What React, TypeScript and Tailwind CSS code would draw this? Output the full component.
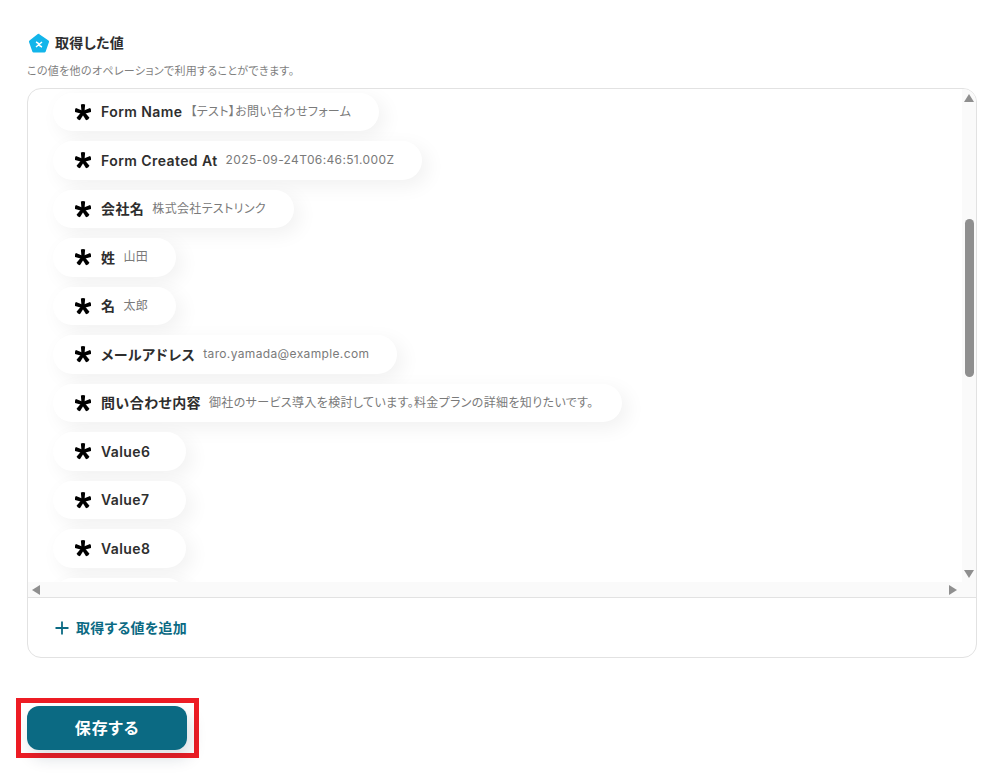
const fields = [
  { name: 'Form Name', value: '【テスト】お問い合わせフォーム' },
  { name: 'Form Created At', value: '2025-09-24T06:46:51.000Z' },
  { name: '会社名', value: '株式会社テストリンク' },
  { name: '姓', value: '山田' },
  { name: '名', value: '太郎' },
  { name: 'メールアドレス', value: 'taro.yamada@example.com' },
  { name: '問い合わせ内容', value: '御社のサービス導入を検討しています。料金プランの詳細を知りたいです。' },
  { name: 'Value6', value: '' },
  { name: 'Value7', value: '' },
  { name: 'Value8', value: '' },
  { name: 'Value9', value: '' },
];

function Asterisk() {
  return (
    <svg width="16" height="18" viewBox="0 0 16 18" className="shrink-0">
      {[0, 72, -72, 144, -144].map((a) => (
        <path key={a} d="M6.5 9.5 L5.9 1.4 Q8 0.4 10.1 1.4 L9.5 9.5 Z" fill="#000" transform={`rotate(${a} 8 9.5)`} />
      ))}
    </svg>
  );
}

function Pill({ name, value }: { name: string; value: string }) {
  return (
    <div className="flex h-[38.5px] w-fit shrink-0 items-center rounded-full bg-white pl-[22px] pr-[28px] shadow-[6px_6px_20px_rgba(0,0,0,0.06)]">
      <Asterisk />
      <span className="ml-[10px] whitespace-nowrap text-[14px] font-semibold tracking-[0.03em] text-[#2e2e2e]">{name}</span>
      <span className="ml-[8px] whitespace-nowrap text-[12px] tracking-[0.03em] text-[#7a7a7a]">{value}</span>
    </div>
  );
}

export default function App() {
  return (
    <div className="h-[779px] overflow-hidden bg-white font-['Inter','Noto_Sans_CJK_JP',sans-serif] [font-feature-settings:'palt']">
      <div className="px-[27px] pt-[33px] pr-[30px]">
        <div className="flex h-[20px] items-center gap-[5px] pl-[1px]">
          <svg width="22" height="21" viewBox="0 0 22 21">
            <path d="M11 1 L20.5 7.5 Q21.3 8 21 9 L17.6 18.8 Q17.3 19.6 16.4 19.6 L5.6 19.6 Q4.7 19.6 4.4 18.8 L1 9 Q0.7 8 1.5 7.5 L9.8 1 Q11 0.3 12 1 Z" fill="#12b5ea" />
            <path d="M8 9 Q10.5 10 11 11.5 Q11.5 13 14 14 M14 9 L8 14" stroke="#fff" strokeWidth="1.5" fill="none" />
          </svg>
          <h2 className="pb-[2px] text-[14px] font-semibold tracking-[0.02em] text-[#2e2e2e]">取得した値</h2>
        </div>
        <p className="mt-[11px] text-[11px] leading-[15px] tracking-[0.03em] text-[#7f7f7f]">この値を他のオペレーションで利用することができます。</p>

        <div className="mt-[9px] h-[570px] overflow-hidden rounded-[14px] border border-[#e2e2e2]">
          <div className="flex h-[509px] border-b border-[#e2e2e2]">
            <div className="flex min-w-0 flex-1 flex-col">
              <div className="flex h-[493px] flex-col gap-[10px] overflow-hidden pl-[25px] pt-[3.5px]">
                {fields.map((f) => (
                  <Pill key={f.name} name={f.name} value={f.value} />
                ))}
              </div>
              <div className="flex h-[15px] items-center justify-between bg-[#fafafa] px-[4px]">
                <div className="h-0 w-0 border-y-[5px] border-r-[8px] border-y-transparent border-r-[#8f8f8f]" />
                <div className="mr-[1px] h-0 w-0 border-y-[5px] border-l-[8px] border-y-transparent border-l-[#8f8f8f]" />
              </div>
            </div>
            <div className="flex w-[14px] flex-col items-center bg-[#fafafa] pt-[5px]">
              <div className="h-0 w-0 border-x-[5px] border-b-[8px] border-x-transparent border-b-[#8f8f8f]" />
              <div className="mt-[117px] h-[158px] w-[9px] rounded-full bg-[#8f8f8f]" />
              <div className="mt-[193px] h-0 w-0 border-x-[5px] border-t-[8px] border-x-transparent border-t-[#8f8f8f]" />
            </div>
          </div>
          <div className="flex h-[59px] items-center pl-[27px]">
            <svg width="14" height="14" viewBox="0 0 14 14">
              <path d="M7 0.5 V13.5 M0.5 7 H13.5" stroke="#0b6a83" strokeWidth="1.8" />
            </svg>
            <span className="ml-[7px] pb-[1px] text-[14px] font-semibold tracking-[0.02em] text-[#0b6a83]">取得する値を追加</span>
          </div>
        </div>
      </div>

      <div className="ml-[16px] mt-[40px] flex h-[60px] w-[183px] items-center border-[5px] border-[#ed1c24] pl-[6px]">
        <button className="h-[44px] w-[160px] rounded-[12px] bg-[#0b6a83] text-[16px] font-bold tracking-[0.05em] text-white shadow-[4px_8px_16px_rgba(11,40,70,0.15)]">保存する</button>
      </div>
    </div>
  );
}
